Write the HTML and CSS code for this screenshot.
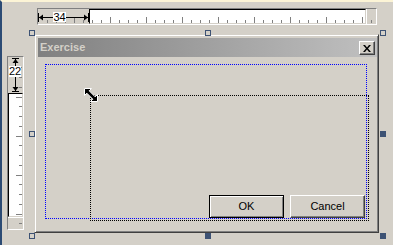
FILE: index.html
```html
<!DOCTYPE html>
<html>
<head>
<meta charset="utf-8">
<link rel="stylesheet" href="styles.css">
</head>
<body>
<div class="app">
  <div class="top-row">
    <div class="hruler">
      <div class="hr-sel"><span class="dim-label h">34</span></div>
      <div class="hr-track"></div>
      <div class="hr-end"></div>
      <svg class="marks" width="338" height="15" viewBox="0 0 338 15">
        <path shape-rendering="crispEdges" stroke="#808080" stroke-width="1" fill="none" d="M9.5 11V14M18.5 11V14M27.5 11V14M36.5 8V14M45.5 11V14M54.5 11V14M63.5 11V14M72.5 8V14M81.5 11V14M90.5 11V14M99.5 11V14M108.5 8V14M117.5 11V14M126.5 11V14M135.5 11V14M144.5 8V14M153.5 11V14M162.5 11V14M171.5 11V14M180.5 8V14M189.5 11V14M198.5 11V14M207.5 11V14M216.5 8V14M225.5 11V14M234.5 11V14M243.5 11V14M252.5 8V14M261.5 11V14M270.5 11V14M279.5 11V14M288.5 8V14M297.5 11V14M306.5 11V14M315.5 11V14M324.5 8V14M333.5 11V14"/>
        <path shape-rendering="crispEdges" stroke="#000" stroke-width="1" fill="none" d="M0.5 4V13M50.5 4V13M1 8.5H50"/>
        <polygon points="1,8.5 5,5.5 5,11.5" fill="#000"/>
        <polygon points="50,8.5 46,5.5 46,11.5" fill="#000"/>
      </svg>
    </div>
  </div>
  <div class="main-row">
    <div class="vruler">
      <div class="vr-sel"><span class="dim-label v">22</span></div>
      <div class="vr-track"></div>
      <div class="vr-end"></div>
      <svg class="marks" width="15" height="172" viewBox="0 0 15 172">
        <path shape-rendering="crispEdges" stroke="#808080" stroke-width="1" fill="none" d="M11 10.5H14M11 20.5H14M11 30.5H14M8 40.5H14M11 49.5H14M11 59.5H14M11 69.5H14M8 79.5H14M11 88.5H14M11 98.5H14M11 108.5H14M8 118.5H14M11 127.5H14M11 137.5H14M11 147.5H14M8 157.5H14M11 166.5H14"/>
        <path shape-rendering="crispEdges" stroke="#000" stroke-width="1" fill="none" d="M4 1.5H11M4 34.5H11M7.5 2V34"/>
        <polygon points="7.5,2 4.5,6 10.5,6" fill="#000"/>
        <polygon points="7.5,34 4.5,30 10.5,30" fill="#000"/>
      </svg>
    </div>
    <div class="canvas">
      <div class="window">
        <div class="titlebar">
          <span class="title">Exercise</span>
          <div class="close">
            <svg width="8" height="7" viewBox="0 0 8 7"><path d="M0 0H2L4 2.4L6 0H8L5 3.5L8 7H6L4 4.6L2 7H0L3 3.5Z" fill="#000"/></svg>
          </div>
        </div>
        <div class="client">
          <div class="btn default">OK</div>
          <div class="btn plain">Cancel</div>
          <div class="guide"></div>
          <div class="drag"></div>
          <svg class="cursor" width="14" height="14" viewBox="0 0 14 14">
            <path d="M0.5 0.5H7.5L5.2 2.8L11.2 8.8L13.5 6.5V13.5H6.5L8.8 11.2L2.8 5.2L0.5 7.5Z" fill="#000" stroke="#fff" stroke-width="1"/>
          </svg>
        </div>
      </div>
      <div class="handle fixed tl"></div>
      <div class="handle fixed tm"></div>
      <div class="handle fixed tr"></div>
      <div class="handle fixed ml"></div>
      <div class="handle grab mr"></div>
      <div class="handle fixed bl"></div>
      <div class="handle grab bm"></div>
      <div class="handle grab br"></div>
    </div>
  </div>
</div>
</body>
</html>
```
FILE: styles.css
```css
html, body {
  margin: 0;
  padding: 0;
}
body {
  background: #d4d0c8;
  font-family: "Liberation Sans", Arial, sans-serif;
  font-size: 11px;
  color: #000;
}
.app {
  width: 393px;
  height: 245px;
  box-sizing: border-box;
  border-top: 2px solid #fcf4d6;
  border-left: 2px solid #2c4b74;
  overflow: hidden;
}
.top-row {
  display: flex;
  padding: 6px 0 0 35px;
}
.hruler {
  position: relative;
  display: flex;
  width: 340px;
  height: 17px;
  box-sizing: border-box;
  border: 1px solid;
  border-color: #808080 #fff #fff #808080;
}
.hr-sel {
  width: 51px;
  flex: none;
  box-sizing: border-box;
  display: flex;
  align-items: flex-start;
  padding: 3px 0 0 15px;
}
.hr-track {
  width: 277px;
  flex: none;
  box-sizing: border-box;
  background: #fff;
  border: 1px solid #d4d0c8;
  border-top-color: #000;
  border-left-color: #000;
}
.hr-end {
  width: 10px;
  flex: none;
  box-shadow: inset 1px 0 #fff;
}
.marks {
  position: absolute;
  left: 0;
  top: 0;
  z-index: 1;
  pointer-events: none;
}
.dim-label {
  position: relative;
  z-index: 2;
  background: #fff;
  color: #000;
  text-align: center;
  font-size: 11px;
}
.dim-label.h {
  width: 13px;
  height: 10px;
  line-height: 10px;
}
.dim-label.v {
  width: 12px;
  height: 11px;
  line-height: 11px;
}
.main-row {
  display: flex;
}
.vruler {
  position: relative;
  flex: none;
  display: flex;
  flex-direction: column;
  margin: 31px 0 0 5px;
  width: 17px;
  height: 174px;
  box-sizing: border-box;
  border: 1px solid;
  border-color: #808080 #fff #fff #808080;
}
.vr-sel {
  height: 36px;
  flex: none;
  box-sizing: border-box;
  display: flex;
  align-items: flex-start;
  padding: 9px 0 0 1px;
}
.vr-track {
  height: 124px;
  flex: none;
  box-sizing: border-box;
  background: #fff;
  border: 1px solid #d4d0c8;
  border-top-color: #000;
  border-left-color: #000;
}
.vr-end {
  height: 12px;
  flex: none;
  box-shadow: inset 0 1px #fff;
}
.canvas {
  position: relative;
  flex: 1;
  height: 220px;
}
.window {
  margin: 9px 0 0 10px;
  width: 345px;
  height: 199px;
  box-sizing: border-box;
  border: 1px solid;
  border-color: #d4d0c8 #404040 #404040 #d4d0c8;
  box-shadow: inset 1px 1px #fff, inset -1px -1px #808080;
  padding: 3px 1px 1px 3px;
  display: flex;
  flex-direction: column;
  background: #d4d0c8;
}
.titlebar {
  height: 19px;
  flex: none;
  display: flex;
  align-items: flex-start;
  background: linear-gradient(to right, #808080, #c0c0c0);
}
.title {
  padding-left: 2px;
  line-height: 19px;
  font-weight: bold;
  color: #d4d0c8;
}
.close {
  margin: 3px 2px 0 auto;
  width: 16px;
  height: 14px;
  box-sizing: border-box;
  border: 1px solid;
  border-color: #fff #404040 #404040 #fff;
  box-shadow: inset -1px -1px #808080;
  background: #d4d0c8;
  display: flex;
  align-items: center;
  justify-content: center;
}
.client {
  flex: 1;
  position: relative;
  display: flex;
  justify-content: flex-end;
  align-items: flex-end;
  gap: 6px;
  padding: 0 12px 13px 0;
}
.btn {
  width: 75px;
  height: 23px;
  box-sizing: border-box;
  display: flex;
  align-items: center;
  justify-content: center;
  line-height: 13px;
  background: #d4d0c8;
}
.btn.default {
  border: 1px solid #000;
  box-shadow: inset 1px 1px #fff, inset -1px -1px #808080;
}
.btn.plain {
  border: 1px solid;
  border-color: #fff #404040 #404040 #fff;
  box-shadow: inset -1px -1px #808080;
}
.guide {
  position: absolute;
  left: 7px;
  top: 7px;
  width: 322px;
  height: 155px;
  box-sizing: border-box;
  border: 1px dotted #0000ff;
}
.drag {
  position: absolute;
  left: 52px;
  top: 38px;
  width: 279px;
  height: 126px;
  box-sizing: border-box;
  border: 1px dotted #000;
}
.cursor {
  position: absolute;
  left: 46px;
  top: 31px;
}
.handle {
  position: absolute;
  width: 6px;
  height: 6px;
  box-sizing: border-box;
}
.handle.fixed {
  border: 1px solid #3d5274;
}
.handle.grab {
  background: #3d5274;
}
.tl { left: 5px; top: 5px; }
.tm { left: 181px; top: 5px; }
.tr { left: 356px; top: 5px; }
.ml { left: 5px; top: 106px; }
.mr { left: 356px; top: 106px; }
.bl { left: 5px; top: 208px; }
.bm { left: 181px; top: 208px; }
.br { left: 356px; top: 208px; }
```
